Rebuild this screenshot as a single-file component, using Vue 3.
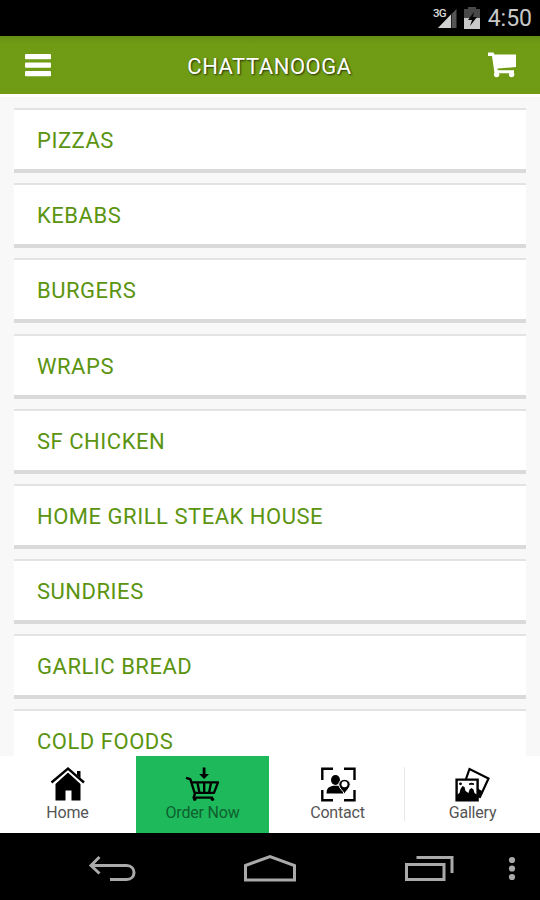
<script setup>
/**
 * Takeaway menu - category list with bottom tab bar
 */
import { ref } from 'vue'

const categories = [
  'PIZZAS',
  'KEBABS',
  'BURGERS',
  'WRAPS',
  'SF CHICKEN',
  'HOME GRILL STEAK HOUSE',
  'SUNDRIES',
  'GARLIC BREAD',
  'COLD FOODS'
]

const tabs = [
  { id: 'home', label: 'Home' },
  { id: 'order', label: 'Order Now' },
  { id: 'contact', label: 'Contact' },
  { id: 'gallery', label: 'Gallery' }
]

const activeTab = ref('order')
</script>

<template>
  <div class="screen">
    <!-- Android status bar -->
    <div class="status-bar">
      <svg class="signal" viewBox="0 0 26 24" width="26" height="24">
        <path d="M6 23L24.5 4v19z" fill="#555" />
        <path d="M6 23L19 9.5V23z" fill="#d0d0d0" />
        <path d="M19.5 8.5V23" stroke="#222" stroke-width="1" />
        <text x="1" y="11.5" class="network">3G</text>
      </svg>
      <svg class="battery" viewBox="0 0 16 22" width="16" height="22">
        <path d="M4 0h8v2h4v20H0V2h4z" fill="#484848" />
        <path d="M0 11h16v11H0z" fill="#c8c8c8" />
        <path d="M10 5L4 13h4l-2 6 7-9H9z" fill="#050505" />
      </svg>
      <span class="clock">4:50</span>
    </div>

    <!-- Header -->
    <header class="header">
      <button class="icon-btn">
        <svg viewBox="0 0 26 23" width="26" height="23" fill="#fff">
          <rect width="26" height="5.3" rx="1" />
          <rect y="8.5" width="26" height="5.3" rx="1" />
          <rect y="17" width="26" height="5.3" rx="1" />
        </svg>
      </button>
      <h1 class="title">CHATTANOOGA</h1>
      <button class="icon-btn">
        <svg viewBox="0 0 28 26" width="28" height="26" fill="#fff">
          <path d="M0 .5h5.5l1 2H28v12.6L9.5 16.6l.3 1.6H26v3H6.5L4 4H0z" />
          <circle cx="8.6" cy="22.6" r="2.7" />
          <circle cx="23.6" cy="22.6" r="2.7" />
        </svg>
      </button>
    </header>

    <!-- Category list -->
    <main class="list">
      <div v-for="name in categories" :key="name" class="card">{{ name }}</div>
    </main>

    <!-- Tab bar -->
    <nav class="tabs">
      <button
        v-for="tab in tabs"
        :key="tab.id"
        class="tab"
        :class="[tab.id, { active: activeTab === tab.id }]"
        @click="activeTab = tab.id"
      >
        <svg v-if="tab.id === 'home'" viewBox="0 0 36 36" width="36" height="36">
          <path d="M5.5 18L18 6.5 30.5 18v16.5h-9V24.5h-6v10h-10z" />
          <path d="M1.5 17L18 2.5l16 14.5" fill="none" stroke="#fff" stroke-width="5" />
          <path d="M27 5h3.5v7L27 9z" />
          <path d="M1.5 16.5L18 2.5l16 14" fill="none" stroke="#000" stroke-width="2.4" />
        </svg>
        <svg v-else-if="tab.id === 'order'" viewBox="0 0 36 36" width="36" height="36">
          <path d="M17.7 1.5h2.8v6.5H24L19.1 13l-4.9-5h3.5z" />
          <g fill="none" stroke="#000" stroke-width="2.3" stroke-linejoin="round">
            <path d="M1 11.8l4.3 1.4 4.7 15M6 16.3h27l-4 10.5H9.5M10 27.5L8.5 31.6H28" />
            <path d="M12.5 17l2 10M19.2 17v10M26 17l-2 10" />
          </g>
          <circle cx="9.7" cy="33.2" r="1.7" />
          <circle cx="27.5" cy="33.2" r="1.7" />
        </svg>
        <svg v-else-if="tab.id === 'contact'" viewBox="0 0 36 36" width="36" height="36">
          <path
            d="M2.3 14V2.7H13M24 2.7h10.5V14M34.5 24v10.2H24M13 34.2H2.3V24"
            fill="none"
            stroke="#000"
            stroke-width="2.4"
          />
          <ellipse cx="15.5" cy="14" rx="4.5" ry="5" />
          <path d="M6.5 27.5c.1-5 2-6.7 6.5-7.7h5c3 .8 5 3 5.5 7.7z" />
          <path
            d="M24.5 28c-1.7-3.5-5.7-6-5.7-9.5 0-3 2.4-5.1 5.7-5.1s5.7 2.1 5.7 5.1c0 3.5-4 6-5.7 9.5z"
            stroke="#fff"
            stroke-width="1"
          />
          <circle cx="24.5" cy="18.2" r="3" fill="#fff" />
        </svg>
        <svg v-else viewBox="0 0 36 36" width="36" height="36">
          <path d="M11 13l3.5-10L33.5 12.5 25 31l-3-1" fill="none" stroke="#000" stroke-width="2.2" />
          <path d="M22 22l5 3-2.5 6.5-2.5-1z" />
          <path d="M1.6 13.6h21v20.6h-21z" fill="#fff" stroke="#000" stroke-width="2.4" />
          <path d="M1.5 34v-5l3-2 1-4 2-3 2 1 1 4 3 2 1-3.5 2-1.5 2 1.5 1 3.5 3 2v5z" />
          <circle cx="5.5" cy="17.8" r="1.4" />
          <path d="M14 18.2q2.5-2 5 0z" stroke="#000" />
        </svg>
        <span class="tab-label">{{ tab.label }}</span>
      </button>
    </nav>

    <!-- Android navigation bar -->
    <div class="nav-bar">
      <svg class="back" viewBox="0 0 50 28" width="50" height="28">
        <path d="M11.5 2L3 10.5l8.5 8M3 10.5h35.5c10 0 10 14 0 14H22" />
      </svg>
      <svg class="go-home" viewBox="0 0 54 28" width="54" height="28">
        <path d="M2.5 11.5L27 2.5l24.5 9v14.5H2.5z" />
      </svg>
      <svg class="recent" viewBox="0 0 50 28" width="50" height="28">
        <path d="M1.5 9.5H39v15H1.5zM11.5 2.5H47V18" />
      </svg>
      <svg class="more" viewBox="0 0 8 26" width="8" height="26">
        <circle cx="4" cy="4" r="3.1" />
        <circle cx="4" cy="12.5" r="3.1" />
        <circle cx="4" cy="21" r="3.1" />
      </svg>
    </div>
  </div>
</template>

<style>
body {
  margin: 0;
}
</style>

<style scoped>
.screen {
  display: flex;
  flex-direction: column;
  width: 540px;
  height: 900px;
  overflow: hidden;
  background: #f8f8f8;
  font-family: Roboto, sans-serif;
}

.screen * {
  box-sizing: border-box;
}

button {
  padding: 0;
  border: none;
  background: none;
  font-family: inherit;
}

svg {
  display: block;
}

.status-bar {
  display: flex;
  justify-content: flex-end;
  flex: none;
  height: 36px;
  padding-right: 8px;
  background: #000;
}

.signal {
  margin: 5px 6px 0 0;
}

.network {
  fill: #d8d8d8;
  font-size: 11.5px;
  font-weight: 500;
  letter-spacing: -0.8px;
}

.battery {
  margin: 7px 8px 0 0;
}

.clock {
  color: #c8c8c8;
  font-size: 23px;
  line-height: 38px;
}

.header {
  display: flex;
  align-items: center;
  justify-content: space-between;
  flex: none;
  height: 58px;
  padding: 0 24px 0 25px;
  background: linear-gradient(#648f12, #6f9c14 8px);
}

.title {
  margin: 2px 0 0;
  color: #fff;
  font-size: 22px;
  font-weight: 400;
  letter-spacing: 0.55px;
  text-shadow: 1px 1px 2px rgba(0, 0, 0, 0.7);
}

.list {
  display: flex;
  flex-direction: column;
  gap: 10.15px;
  height: 662px;
  padding: 11.2px 14px 0;
  border-top: 3px solid #fff;
  overflow: hidden;
}

.card {
  flex: none;
  height: 65px;
  padding-left: 23px;
  border-top: 2px solid #e3e3e3;
  border-bottom: 4px solid #dadada;
  background: #fff;
  color: #5b9410;
  font-size: 22px;
  letter-spacing: 0.52px;
  line-height: 61px;
}

.tabs {
  display: flex;
  flex: none;
  height: 77px;
  background: #fff;
}

.tab {
  display: flex;
  flex-direction: column;
  align-items: center;
  flex: 1;
  padding-top: 10px;
}

.tab.active {
  flex: 0 0 133px;
  margin: 0 1px;
  background: #1db95a;
}

.tab.contact {
  background: linear-gradient(#e8e8e8, #e8e8e8) right 11px / 1px 54px no-repeat;
}

.tab-label {
  color: #555;
  font-size: 16px;
  letter-spacing: -0.2px;
  line-height: 21px;
}

.active .tab-label {
  color: #0f6030;
}

.nav-bar {
  display: flex;
  flex: 1;
  padding-left: 88px;
  background: #000;
}

.nav-bar svg {
  flex: none;
  margin-top: 21px;
  fill: none;
  stroke: #aaa;
  stroke-width: 3;
}

.nav-bar .back {
  margin-top: 22px;
}

.nav-bar .go-home {
  margin-left: 105px;
}

.nav-bar .recent {
  margin: 22px 0 0 108px;
}

.nav-bar .more {
  margin: 23px 0 0 53px;
  fill: #aaa;
  stroke: none;
}
</style>
